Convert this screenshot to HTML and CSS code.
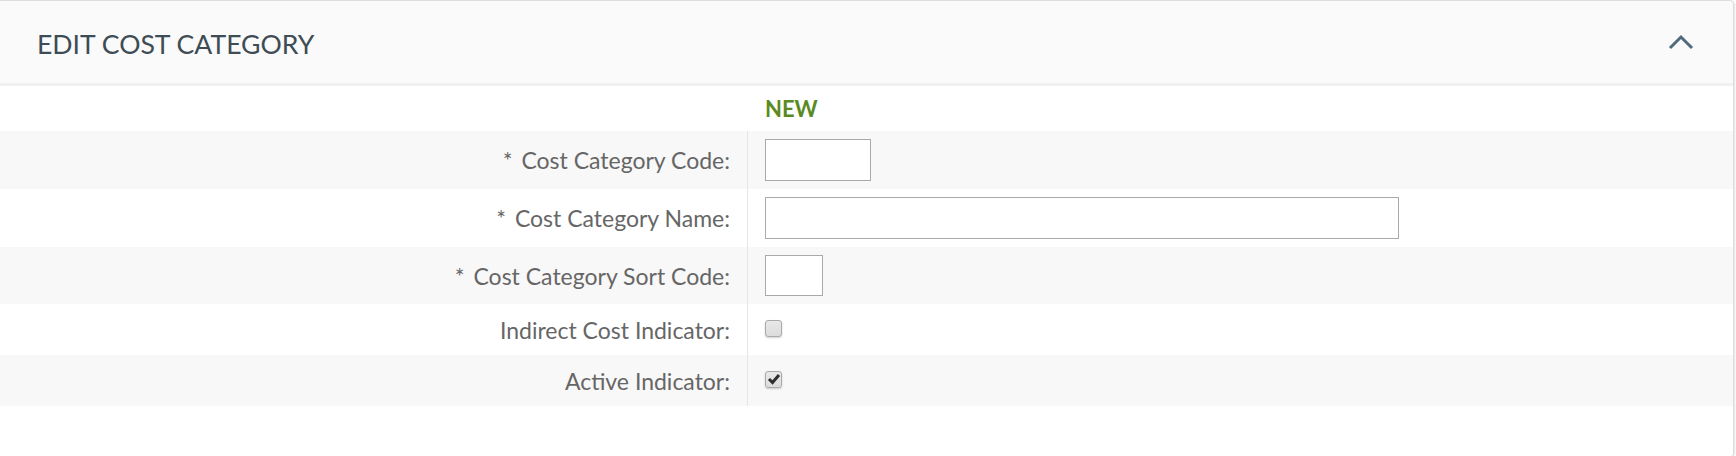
FILE: index.html
```html
<!DOCTYPE html>
<html lang="en">
<head>
<meta charset="utf-8">
<title>Edit Cost Category</title>
<link rel="stylesheet" href="styles.css">
</head>
<body>
<div class="card">
  <div class="card-header">
    <h2 class="card-title">EDIT COST CATEGORY</h2>
    <button class="toggle" aria-label="Collapse">
      <svg width="26" height="16" viewBox="0 0 26 16"><polyline points="2,14 13,3 24,14" fill="none" stroke="#4f6b7c" stroke-width="3"/></svg>
    </button>
  </div>
  <div class="form">
    <div class="status-row">
      <div class="status-spacer"></div>
      <div class="status">NEW</div>
    </div>
    <div class="row row-gray row-input">
      <div class="label"><span class="req">*</span>Cost Category Code:</div>
      <div class="value"><input class="text code" type="text"></div>
    </div>
    <div class="row row-input">
      <div class="label"><span class="req">*</span>Cost Category Name:</div>
      <div class="value"><input class="text name" type="text"></div>
    </div>
    <div class="row row-gray row-input row-short">
      <div class="label"><span class="req">*</span>Cost Category Sort Code:</div>
      <div class="value"><input class="text sort" type="text"></div>
    </div>
    <div class="row row-check">
      <div class="label">Indirect Cost Indicator:</div>
      <div class="value"><span class="cb"></span></div>
    </div>
    <div class="row row-gray row-check">
      <div class="label">Active Indicator:</div>
      <div class="value"><span class="cb"><svg width="14" height="12" viewBox="0 0 14 12"><polyline points="2,6 5.5,9.5 12,2" fill="none" stroke="#2e2e2e" stroke-width="3"/></svg></span></div>
    </div>
  </div>
</div>
</body>
</html>
```
FILE: styles.css
```css
html, body {
  margin: 0;
  padding: 0;
  background: #ffffff;
}
body {
  font-family: Lato, "Liberation Sans", sans-serif;
  overflow: hidden;
}
.card {
  box-sizing: border-box;
  width: 1738px;
  height: 458px;
  margin-left: -4px;
  border: 1px solid #dddddd;
  border-radius: 5px;
  box-shadow: 1px 0 2px rgba(0, 0, 0, 0.12);
  background: #ffffff;
  overflow: hidden;
}
.card-header {
  height: 82px;
  background: #fafafa;
  border-bottom: 3px solid #f0f0f0;
  display: flex;
  align-items: center;
  justify-content: space-between;
  padding: 0 39px 0 40px;
}
.card-title {
  margin: 3px 0 0;
  font-weight: 400;
  font-size: 26.6px;
  color: #3e4c55;
  letter-spacing: 0;
}
.toggle {
  border: 0;
  background: none;
  padding: 0;
  display: flex;
  cursor: pointer;
}
.form {
  display: flex;
  flex-direction: column;
}
.status-row {
  display: grid;
  grid-template-columns: 751px 1fr;
  height: 45px;
  align-items: center;
}
.status {
  padding-left: 17px;
  font-weight: 700;
  font-size: 22px;
  color: #5b8a23;
}
.row {
  display: grid;
  grid-template-columns: 751px 1fr;
  color: #666666;
  font-size: 23px;
}
.row-gray {
  background: #f8f8f8;
}
.row-input {
  height: 58px;
}
.row-short {
  height: 57px;
}
.row-check {
  height: 51px;
}
.label {
  border-right: 1px solid #e3e7e7;
  display: flex;
  align-items: center;
  justify-content: flex-end;
  padding-right: 17px;
}
.req {
  margin-right: 9px;
}
.value {
  display: flex;
  align-items: center;
  padding-left: 17px;
}
.text {
  box-sizing: border-box;
  height: 42px;
  border: 1px solid #aaaaaa;
  background: #ffffff;
  margin: 0;
  padding: 4px 6px;
  font: inherit;
}
.code { width: 106px; }
.name { width: 634px; }
.sort { width: 58px; height: 41px; }
.cb {
  box-sizing: border-box;
  width: 17px;
  height: 17px;
  border: 1px solid #aaaaaa;
  border-radius: 3px;
  background: linear-gradient(#e8e8e8, #dcdcdc);
  box-shadow: 0 1px 2px rgba(0, 0, 0, 0.18);
  display: flex;
  align-items: center;
  justify-content: center;
  margin-top: -3px;
}
```
